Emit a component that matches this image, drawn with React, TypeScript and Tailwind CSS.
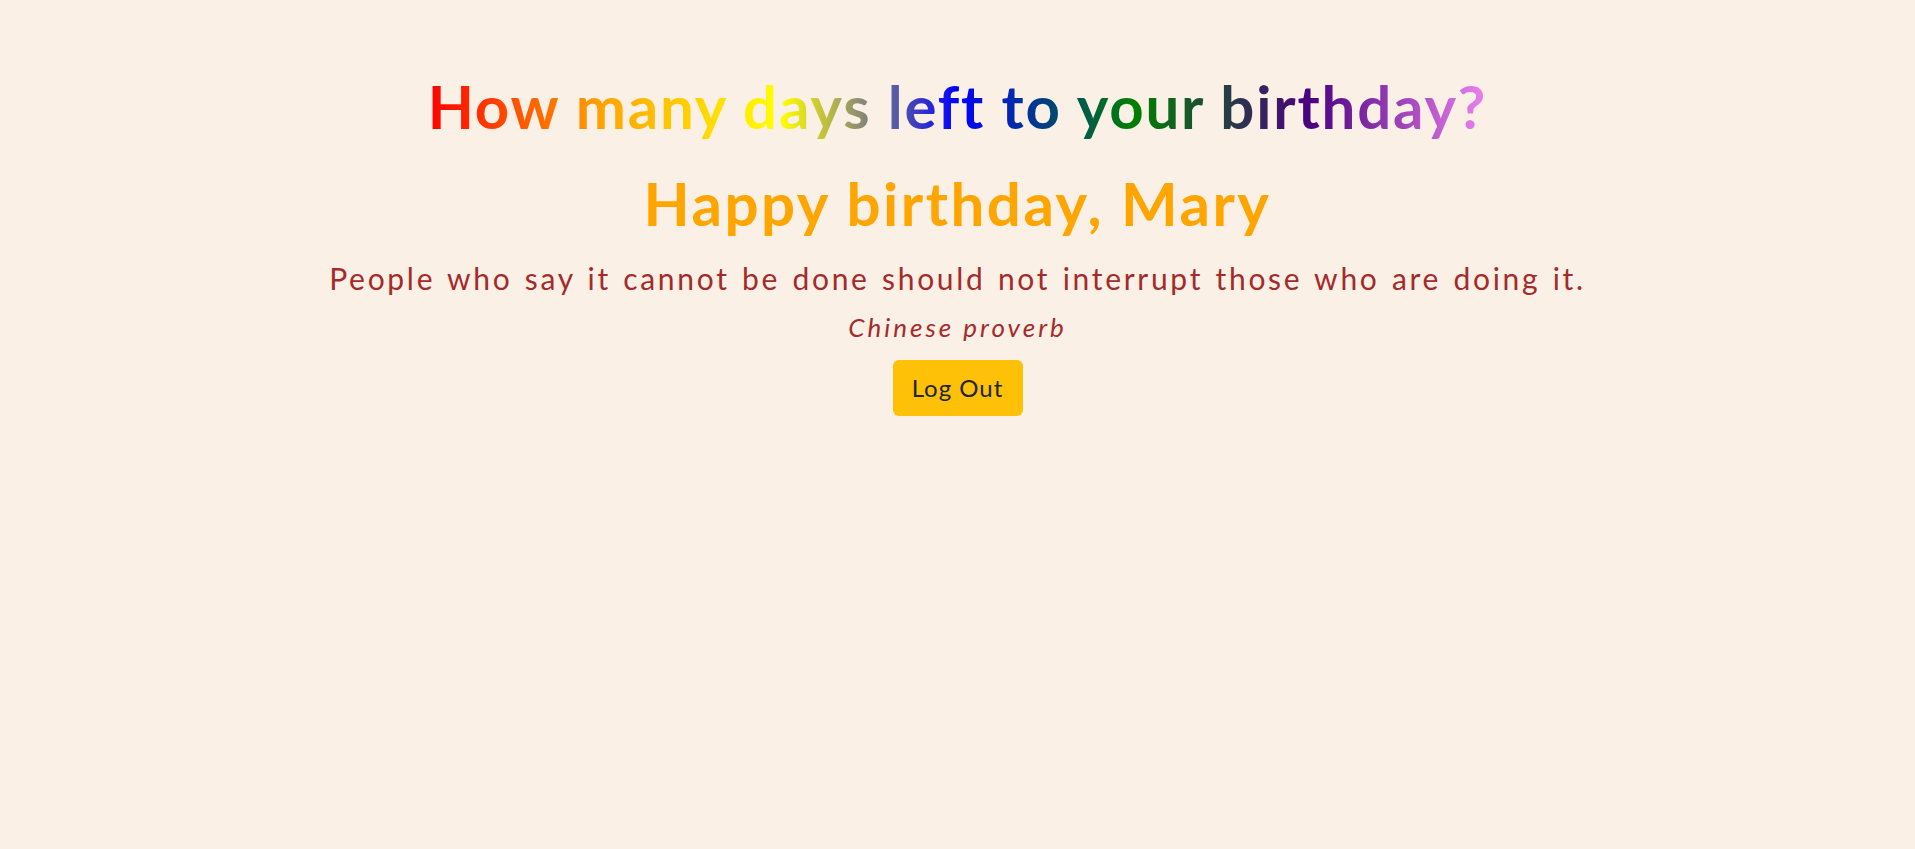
import React from "react";

export default function App() {
  return (
    <div className="min-h-[849px] w-full bg-[#faf0e6] font-['Lato',sans-serif]">
      <div className="flex flex-col items-center pt-[70px] text-center">
        <h1 className="inline-block bg-[linear-gradient(to_right,red,orange,yellow,blue,green,indigo,violet)] bg-clip-text text-[60px] font-bold leading-[72px] tracking-[1.8px] text-transparent">
          How many days left to your birthday?
        </h1>
        <h2 className="mt-[25px] text-[60px] font-bold leading-[72px] tracking-[2.5px] text-[#ffa500]">
          Happy birthday, Mary
        </h2>
        <p className="mt-[19px] text-[30px] leading-[40px] tracking-[2.7px] [word-spacing:2px] text-[#a52a2a]">
          People who say it cannot be done should not interrupt those who are doing it.
        </p>
        <p className="mt-[12px] text-[26px] italic leading-[34px] tracking-[3px] text-[#a52a2a]">
          Chinese proverb
        </p>
        <button className="mt-[16px] h-[56px] w-[130px] rounded-[6px] bg-[#ffc107] text-[24px] tracking-[1px] text-[#212529]">
          Log Out
        </button>
      </div>
    </div>
  );
}
